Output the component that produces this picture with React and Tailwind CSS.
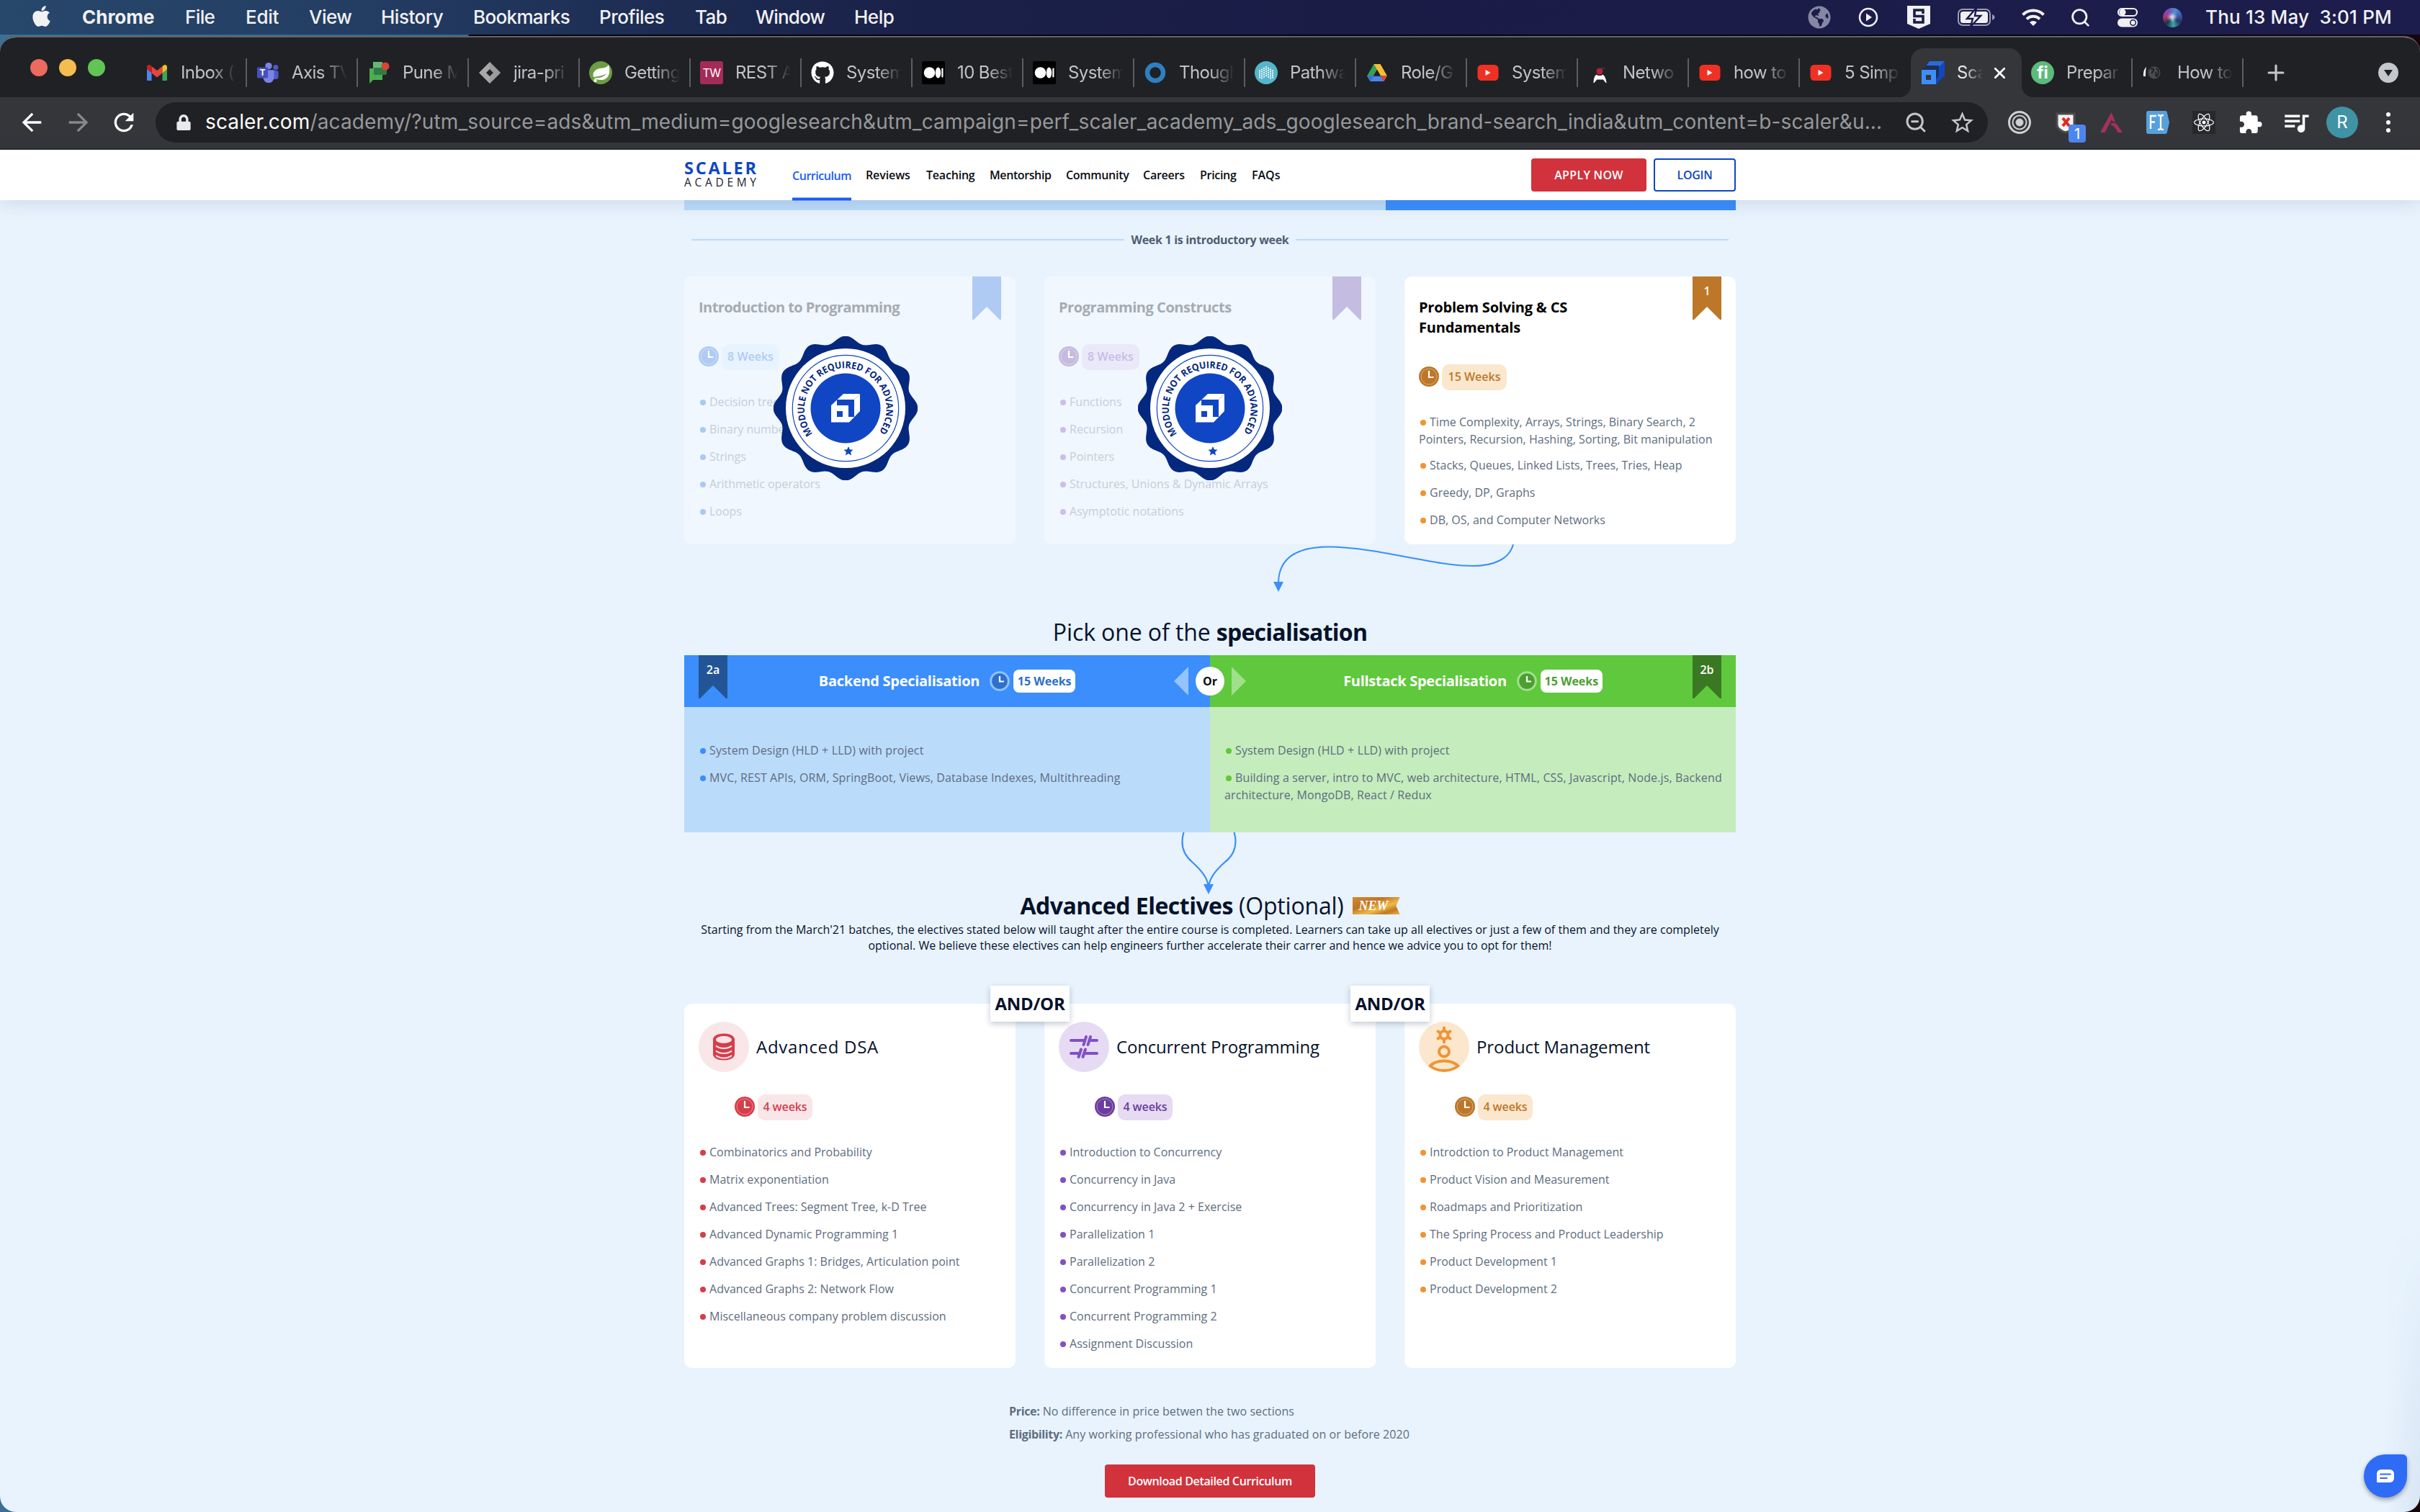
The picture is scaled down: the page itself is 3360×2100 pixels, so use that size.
import { FaApple, FaGithub, FaReact, FaLock, FaGlobeAmericas } from "react-icons/fa";
import { MdQueueMusic, MdStarBorder, MdArrowBack, MdArrowForward, MdRefresh, MdExtension } from "react-icons/md";
import { Search, X, Plus, ZoomOut } from "lucide-react";

const SANS = "font-['Open_Sans','Noto_Sans',sans-serif]";

/* ---------- menu bar ---------- */

const MENUS = [
  ["File", "w-[84px] tracking-[-0.6px]"],
  ["Edit", "w-[88px] tracking-[-0.3px]"],
  ["View", "w-[100px] tracking-[-0.5px]"],
  ["History", "w-[128px] tracking-[-0.5px]"],
  ["Bookmarks", "w-[175px] tracking-[-0.65px]"],
  ["Profiles", "w-[133px] tracking-[-0.5px]"],
  ["Tab", "w-[84px] tracking-[-0.6px]"],
  ["Window", "w-[137px] tracking-[-0.85px]"],
  ["Help", "w-[80px] tracking-[-0.5px]"],
];

function Battery() {
  return (
    <svg width="54" height="28" viewBox="0 0 54 28" fill="none">
      <rect x="2" y="3" width="44" height="22" rx="6" stroke="#9a9bb5" strokeWidth="2" />
      <rect x="5" y="6" width="38" height="16" rx="3.500" fill="#f1f1f5" />
      <path d="M49 10v8c2-.8 3.500-2.200 3.500-4S51 10.800 49 10z" fill="#9a9bb5" />
      <path d="M27 1 14 16h8l-3 11 14-15h-8l2-11z" fill="#f1f1f5" stroke="#1b1c4a" strokeWidth="2.500" />
    </svg>
  );
}

function Wifi() {
  return (
    <svg width="34" height="26" viewBox="0 0 34 26" fill="none" stroke="#f1f1f5" strokeWidth="4">
      <path d="M2.500 9.500C10.500 1.500 23.500 1.500 31.500 9.500" />
      <path d="M8 15.500c5-5 13-5 18 0" />
      <path d="M12 20c2.800-2.800 7.200-2.800 10 0l-5 5z" fill="#f1f1f5" stroke="none" />
    </svg>
  );
}

function MenuBar() {
  return (
    <div className="flex h-12 shrink-0 items-center bg-[linear-gradient(90deg,#27476b_0%,#243d63_15%,#1d2c52_27%,#1a2149_38%,#1a1c46_55%,#1c1d4c_100%)] font-['Inter',sans-serif] text-[26px] leading-none font-medium text-[#f1f1f4]">
      <div className="flex w-[114px] pb-1 pl-[41px]">
        <FaApple size={33} />
      </div>
      <div className="w-[143px] font-bold">Chrome</div>
      {MENUS.map(([label, cls]) => (
        <div key={label} className={cls}>{label}</div>
      ))}
      <div className="ml-auto flex w-[860px] items-center">
        <div className="flex w-[52px] justify-center text-[#8687a3]"><FaGlobeAmericas size={32} /></div>
        <div className="flex w-[84px] justify-center">
          <svg width="28" height="28" viewBox="0 0 28 28" fill="none">
            <circle cx="14" cy="14" r="12" stroke="#f1f1f5" strokeWidth="2.500" />
            <path d="M11 8.500v11l8-5.500z" fill="#f1f1f5" />
          </svg>
        </div>
        <div className="flex w-[55px] justify-center">
          <svg width="34" height="34" viewBox="0 0 34 34">
            <path d="M1 1h32v25L17 33 1 26z" fill="#f1f1f5" />
            <path d="M23 12V7H11v8.500h12V24H11v-5" fill="none" stroke="#1b1c4a" strokeWidth="3.600" />
          </svg>
        </div>
        <div className="flex w-[105px] justify-center"><Battery /></div>
        <div className="flex w-[53px] justify-center"><Wifi /></div>
        <div className="flex w-[79px] justify-center"><Search size={29} strokeWidth={2.300} /></div>
        <div className="flex w-[51px] justify-center">
          <svg width="30" height="28" viewBox="0 0 30 28" fill="none">
            <rect x="2" y="2" width="26" height="10" rx="5" stroke="#f1f1f5" strokeWidth="2.200" />
            <circle cx="8" cy="7" r="4.500" fill="#f1f1f5" />
            <rect x="1" y="15.500" width="28" height="12" rx="6" fill="#f1f1f5" />
            <circle cx="22.500" cy="21.500" r="3.800" stroke="#1b1c4a" strokeWidth="1.500" />
          </svg>
        </div>
        <div className="flex w-[74px] justify-center">
          <div className="flex size-[27px] items-center justify-center rounded-full bg-[conic-gradient(from_20deg,#4d8fc8,#3f58b8,#2a3560,#35a7b0,#20303f,#a73b7a,#7b4bb8,#4d8fc8)]">
            <div className="size-2 rounded-full bg-white/90 blur-[2px]" />
          </div>
        </div>
        <div className="pl-[9px] tracking-[0.2px] whitespace-pre">Thu 13 May  3:01 PM</div>
      </div>
    </div>
  );
}

/* ---------- tab icons ---------- */

function Gmail() {
  return (
    <svg width="32" height="32" viewBox="0 0 32 32">
      <path d="M2 8v17.500A1.500 1.500 0 0 0 3.500 27H8.500V15z" fill="#4a86f0" />
      <path d="M30 8v17.500a1.500 1.500 0 0 1-1.500 1.500H23.500V15z" fill="#3ba756" />
      <path d="M8.500 7 16 13l7.500-6v9.500L16 22.500l-7.500-6z" fill="#e2463c" />
      <path d="M2 11V8c0-2.500 3-3.800 5-2.200L8.500 7v9.500z" fill="#c5221f" />
      <path d="M30 11V8c0-2.500-3-3.800-5-2.200L23.500 7v9.500z" fill="#f7bb2f" />
    </svg>
  );
}

function Teams() {
  return (
    <svg width="34" height="32" viewBox="0 0 34 32">
      <circle cx="28.500" cy="8" r="3.800" fill="#5059c9" />
      <rect x="21" y="12.500" width="11.500" height="13" rx="4" fill="#5059c9" />
      <circle cx="18" cy="6" r="5" fill="#7b83eb" />
      <path d="M10 12h16v11a8 8 0 0 1-16 0z" fill="#7b83eb" />
      <rect x="1" y="8" width="16" height="16" rx="1.500" fill="#4650bb" />
      <text x="9" y="20.500" textAnchor="middle" fontFamily="Liberation Sans, sans-serif" fontWeight="700" fontSize="13" fill="#fff">T</text>
    </svg>
  );
}

function Meet() {
  return (
    <svg width="32" height="32" viewBox="0 0 32 32">
      <path d="M8 1h13v12H8z" fill="#63b877" />
      <path d="M3 10h18v16H8l-5 5z" fill="#4cae50" />
      <path d="M9 9h18v8a2 2 0 0 1-2 2H9z" fill="#2e7d46" />
      <circle cx="25" cy="7" r="5.500" fill="#db4437" />
    </svg>
  );
}

function Diamond() {
  return (
    <svg width="32" height="32" viewBox="0 0 32 32">
      <path d="M16 1 31 16 16 31 1 16zM16 11l-5 5 5 5 5-5z" fill="#a9a9a9" fillRule="evenodd" />
      <path d="M16 1v10l5 5-5 5v10l15-15z" fill="#8d8d8d" fillOpacity=".5" />
    </svg>
  );
}

function Spring() {
  return (
    <svg width="32" height="32" viewBox="0 0 32 32">
      <circle cx="16" cy="16" r="16" fill="#6c9d43" />
      <path d="M27 5c3 9 1 20-9 21-5 .5-9-1-11-3 9 1 14-2 17-6-5 3-10 4-18 5-2-7 3-11 9-12 6-.5 9-1 12-5z" fill="#fff" />
      <circle cx="8.500" cy="27" r="2.200" fill="#fff" />
    </svg>
  );
}

function Letters({ children, className }) {
  return <div className={"flex size-8 items-center justify-center font-['Inter',sans-serif] leading-none text-white " + className}>{children}</div>;
}

function Medium() {
  return (
    <svg width="32" height="32" viewBox="0 0 32 32">
      <rect width="32" height="32" rx="2" fill="#000" />
      <circle cx="10.500" cy="16" r="7.800" fill="#fff" />
      <ellipse cx="22.500" cy="16" rx="3.800" ry="7.500" fill="#fff" />
      <rect x="27.300" y="9.500" width="2.200" height="13" rx="1" fill="#fff" />
    </svg>
  );
}

function Ring() {
  return (
    <svg width="32" height="32" viewBox="0 0 32 32">
      <circle cx="16" cy="16" r="11" fill="none" stroke="#2f7fc2" strokeWidth="6.500" />
    </svg>
  );
}

function Pathway() {
  const dots = [];
  for (let r = 0; r < 5; r++) for (let c = 0; c < 7; c++) dots.push([7 + c * 3, 8 + Math.abs(c - 3) * 1.800 + r * 3]);
  return (
    <svg width="32" height="32" viewBox="0 0 32 32">
      <circle cx="16" cy="16" r="16" fill="#56b5cb" />
      {dots.filter(([, y]) => y < 25).map(([x, y]) => <circle key={x + "-" + y} cx={x} cy={y} r="1.100" fill="#fff" />)}
    </svg>
  );
}

function Drive() {
  return (
    <svg width="32" height="32" viewBox="0 0 32 32">
      <path d="M11.500 4h9L11 20.500 6.500 28 2 20.500z" fill="#34a05a" />
      <path d="M11.500 4h9l9.500 16.500h-9z" fill="#f8bd33" />
      <path d="M11 20.500h10L25.500 28h-19z" fill="#4a84ee" />
      <path d="M2 20.500h9L6.500 28z" fill="#3d6fdc" />
      <path d="M21 20.500h9L25.500 28z" fill="#e0483c" />
      <path d="m16 12 5 8.500H11z" fill="#202124" />
    </svg>
  );
}

function YouTube() {
  return (
    <svg width="32" height="32" viewBox="0 0 32 32">
      <rect x="1.500" y="5" width="29" height="22" rx="5.500" fill="#ee3124" />
      <path d="M12.500 12v8l7-4z" fill="#fff" />
    </svg>
  );
}

function Bug() {
  return (
    <svg width="32" height="32" viewBox="0 0 32 32">
      <circle cx="17" cy="14" r="4.500" fill="#b3203c" />
      <path d="M9 30c0-5 1-9 3.500-11 2 2 7 2 9 0C24 21 25.500 25 26 30l-4-5h-9z" fill="#fff" stroke="#fff" strokeWidth="1" />
      <path d="M19 12c1-4 4-3 6-1" stroke="#555" fill="none" strokeWidth="1" />
    </svg>
  );
}

function ScalerCube() {
  return (
    <svg width="32" height="32" viewBox="0 0 32 32">
      <path d="M11 0h21L25 8H5z" fill="#2a6bd6" />
      <path d="M32 0v20L20 32V12z" fill="#1247c0" />
      <path d="M0 12 6 6h18v14l-4 5V12z" fill="#202f55" />
      <path d="M0 12h20v20H0zM6 19v7h7v-7z" fill="#3c8ffb" fillRule="evenodd" />
    </svg>
  );
}

function GhostGlobe() {
  return (
    <svg width="32" height="32" viewBox="0 0 32 32">
      <path d="M2 21c0-5 0-9 4-13-1 4-1 9-1 13z" fill="#fff" />
      <circle cx="17" cy="16" r="8.500" fill="#4a4b4f" />
      <path d="M12 11c3-2 5 0 4 2s-3 2-2 4M20 10c3 2 4 6 1 11-3 0-1-4-2-6" fill="none" stroke="#202124" strokeWidth="2" />
    </svg>
  );
}

const TABS = [
  ["Inbox (", <Gmail />],
  ["Axis TV", <Teams />],
  ["Pune M", <Meet />],
  ["jira-pri", <Diamond />],
  ["Getting", <Spring />],
  ["REST A", <Letters className="rounded-[3px] bg-[#a42b57] text-[16px] tracking-[-0.5px]">TW</Letters>],
  ["System", <FaGithub size={32} color="#fff" />],
  ["10 Best", <Medium />],
  ["System", <Medium />],
  ["Though", <Ring />],
  ["Pathwa", <Pathway />],
  ["Role/G", <Drive />],
  ["System", <YouTube />],
  ["Netwo", <Bug />],
  ["how to", <YouTube />],
  ["5 Simp", <YouTube />],
  ["Scal", <ScalerCube />, true],
  ["Prepar", <Letters className="rounded-full bg-[#5bbb7b] text-[23px] font-bold">fi</Letters>],
  ["How to", <GhostGlobe />],
];

function Tab({ label, icon, active, bare }) {
  return (
    <div
      className={
        "relative flex h-[68px] w-[154px] shrink-0 items-center " +
        (active ? "rounded-t-[18px] bg-[#35363a] pl-[15px]" : "pl-[13px]")
      }
    >
      {active && (
        <>
          <svg className="absolute bottom-0 -left-4" width="16" height="16"><path d="M16 0v16H0A16 16 0 0 0 16 0z" fill="#35363a" /></svg>
          <svg className="absolute -right-4 bottom-0" width="16" height="16"><path d="M0 0v16h16A16 16 0 0 1 0 0z" fill="#35363a" /></svg>
        </>
      )}
      <div className="flex size-8 shrink-0 items-center justify-center">{icon}</div>
      <div
        className={
          "ml-[17px] overflow-hidden whitespace-nowrap " +
          (active
            ? "w-[36px] tracking-[-0.4px] text-[#e8eaed] [mask-image:linear-gradient(90deg,#000_30%,transparent)]"
            : "w-[77px] tracking-[-0.6px] text-[#c0c3c7] [mask-image:linear-gradient(90deg,#000_55%,transparent)]")
        }
      >
        {label}
      </div>
      {active && <X size={25} strokeWidth={2.600} className="ml-[11px] shrink-0 text-white" />}
      {!active && !bare && <div className="ml-auto h-10 w-0.5 bg-[#5b5d61]" />}
    </div>
  );
}

function TabStrip() {
  return (
    <div className="flex h-[83px] shrink-0 items-end bg-[#202124] font-['Inter',sans-serif] text-[24px] leading-[30px]">
      <div className="flex h-[83px] w-[189px] shrink-0 items-center gap-4 pl-[42px]">
        <div className="size-6 rounded-full bg-[#ed6a5e]" />
        <div className="size-6 rounded-full bg-[#f5bd4f]" />
        <div className="size-6 rounded-full bg-[#61c454]" />
      </div>
      {TABS.map(([label, icon, active], i) => (
        <Tab key={i} label={label} icon={icon} active={active} bare={i === 15} />
      ))}
      <div className="flex h-[68px] w-[90px] items-center justify-center text-[#c4c7cb]">
        <Plus size={34} strokeWidth={2.200} />
      </div>
      <div className="mr-[30px] ml-auto flex h-[68px] items-center">
        <svg width="28" height="28" viewBox="0 0 28 28">
          <circle cx="14" cy="14" r="14" fill="#c4c7cb" />
          <path d="M8 10h12l-6 9z" fill="#202124" />
        </svg>
      </div>
    </div>
  );
}

function Slot({ children }) {
  return <div className="relative flex w-16 shrink-0 items-center justify-center">{children}</div>;
}

function Toolbar() {
  return (
    <div className="flex h-[73px] shrink-0 items-center border-b-2 border-[#27282b] bg-[#35363a] pr-3 pb-px pl-[11px] font-['Inter',sans-serif] text-[28px]">
      <div className="flex w-[65px] justify-center text-white"><MdArrowBack size={40} /></div>
      <div className="flex w-[65px] justify-center text-[#87888b]"><MdArrowForward size={40} /></div>
      <div className="flex w-[62px] justify-center text-white"><MdRefresh size={40} /></div>
      <div className="ml-[13px] flex h-14 w-[2544px] items-center overflow-hidden rounded-full bg-[#202124] pr-1 pl-[28px] whitespace-nowrap text-[#96989c]">
        <FaLock size={22} className="mr-[19px] text-[#e8eaed]" />
        <div className="grow pb-0.5 tracking-[0.14px]">
          <span className="text-white">scaler.com</span>
          <span>/academy/?utm_source=ads&amp;utm_medium=googlesearch&amp;utm_campaign=perf_scaler_academy_ads_googlesearch_brand-search_india&amp;utm_content=b-scaler&amp;u...</span>
        </div>
        <div className="flex w-16 shrink-0 justify-center text-[#c4c7cb]"><ZoomOut size={32} strokeWidth={2.200} /></div>
        <div className="flex w-16 shrink-0 justify-center text-[#c4c7cb]"><MdStarBorder size={37} /></div>
      </div>
      <div className="ml-3 flex items-center">
        <Slot>
          <svg width="34" height="34" viewBox="0 0 34 34" fill="none" stroke="#cfd0d2">
            <circle cx="17" cy="17" r="14.500" strokeWidth="3" />
            <circle cx="17" cy="17" r="9.500" strokeWidth="2" />
            <circle cx="17" cy="17" r="5" fill="#cfd0d2" />
          </svg>
        </Slot>
        <Slot>
          <svg width="28" height="30" viewBox="0 0 28 30">
            <path d="M2 3h24v15c0 6-6 9-12 11C8 27 2 24 2 18z" fill="#f3f3f3" stroke="#4c4c4c" strokeWidth="3" />
            <path d="m10 9 9 11M19 9l-9 11" stroke="#e02b20" strokeWidth="4" />
          </svg>
          <div className="absolute top-[18px] left-[36px] flex h-[25px] w-6 items-center justify-center rounded-[4px] bg-[#4d86ee] text-[20px] leading-none text-white">1</div>
        </Slot>
        <Slot>
          <svg width="32" height="28" viewBox="0 0 32 28">
            <path d="M15.500 0 17 8 6.500 28H0z" fill="#a5315c" />
            <path d="M15.500 0 21 13l-4.500-.5z" fill="#a5315c" />
            <path d="M14 17c3-3 6-3 9-.5L31 28h-7c-1-5-5-9-10-11z" fill="#a5315c" />
          </svg>
        </Slot>
        <Slot>
          <svg width="32" height="32" viewBox="0 0 32 32">
            <path d="M3 0h23a3 3 0 0 1 3 3l3 13-3 13a3 3 0 0 1-3 3H3a3 3 0 0 1-3-3V3a3 3 0 0 1 3-3z" fill="#58a0dc" />
            <path d="M6 25V7h8M6 15.500h6M16 6c2 0 4 0 4 2v16c0 2-2 2-4 2M24 6c-2 0-4 0-4 2v16c0 2 2 2 4 2" fill="none" stroke="#fff" strokeWidth="2.300" />
          </svg>
        </Slot>
        <Slot>
          <div className="flex size-8 items-center justify-center bg-[#27282b] text-white"><FaReact size={28} /></div>
        </Slot>
        <Slot><MdExtension size={35} color="#fff" /></Slot>
        <Slot><MdQueueMusic size={42} color="#fff" /></Slot>
        <Slot>
          <div className="flex size-11 items-center justify-center rounded-full bg-[#3f93a5] text-[24px] leading-none text-white">R</div>
        </Slot>
        <Slot>
          <div className="flex flex-col gap-[5px]">
            <div className="size-1.5 rounded-full bg-white" />
            <div className="size-1.5 rounded-full bg-white" />
            <div className="size-1.5 rounded-full bg-white" />
          </div>
        </Slot>
      </div>
    </div>
  );
}

/* ---------- page ---------- */

const NAV = [
  ["Reviews", "w-[64px] tracking-[-0.1px]"],
  ["Teaching", "w-[68px] tracking-[-0.2px]"],
  ["Mentorship", "w-[86px] tracking-[-0.4px]"],
  ["Community", "w-[87px] tracking-[-0.3px]"],
  ["Careers", "w-[59px] tracking-[-0.25px]"],
  ["Pricing", "w-[52px] tracking-[-0.3px]"],
  ["FAQs", "w-[41px] tracking-[0px]"],
];

function Header() {
  return (
    <div className="relative z-10 flex h-[70px] shrink-0 justify-center bg-white shadow-[0_4px_28px_rgba(20,50,110,0.13)]">
      <div className="flex w-[1460px] items-center text-[16px] font-semibold text-[#0b0d12]">
        <div className="w-[150px]">
          <div className="text-[23.500px] leading-[21px] font-bold tracking-[2.800px] text-[#0f47c4]">SCALER</div>
          <div className="text-[15.500px] leading-[19px] font-normal tracking-[4.700px] text-[#1a2233]">ACADEMY</div>
        </div>
        <div className="flex h-full items-center gap-5 pb-px whitespace-nowrap">
          <div className="flex h-[70px] w-[82px] translate-y-[0.5px] items-center border-b-4 border-[#1c5cf5] pt-1 tracking-[-0.46px] text-[#1c5cf5]">Curriculum</div>
          {NAV.map(([label, cls]) => (
            <div key={label} className={cls}>{label}</div>
          ))}
        </div>
        <div className="ml-auto flex gap-[10px]">
          <div className="flex h-[46px] w-[160px] items-center justify-center rounded-[4px] bg-[#d1323c] pb-px tracking-[0.3px] text-white">APPLY NOW</div>
          <div className="flex h-[46px] w-[114px] items-center justify-center rounded-[4px] border-2 border-[#0f47c4] pb-px tracking-[-0.3px] text-[#0f47c4]">LOGIN</div>
        </div>
      </div>
    </div>
  );
}

function Ribbon({ className, label }) {
  return (
    <div className={"absolute top-0 flex h-[60px] w-10 justify-center pt-2 text-[16px] leading-6 font-semibold text-white [clip-path:polygon(0_0,100%_0,100%_100%,95%_100%,50%_70%,5%_100%,0_100%)] " + className}>
      {label}
    </div>
  );
}

function Clock({ className }) {
  return (
    <svg width="28" height="28" viewBox="0 0 28 28" className={className}>
      <circle cx="14" cy="14" r="14" fill="currentColor" />
      <circle cx="14" cy="14" r="11" fill="none" stroke="#fff" strokeOpacity=".4" strokeWidth="1" />
      <path d="M14 6v9h6.500" fill="none" stroke="#fff" strokeWidth="2.200" />
    </svg>
  );
}

function SpecClock({ ring, face }) {
  return (
    <svg width="28" height="28" viewBox="0 0 28 28">
      <circle cx="14" cy="14" r="12.300" fill={face} stroke={ring} strokeWidth="3" />
      <path d="M14 7v7.500h6" fill="none" stroke="#fff" strokeWidth="2.200" />
    </svg>
  );
}

const SCALLOP =
  "M" +
  Array.from({ length: 240 }, (_, i) => {
    const a = (i / 240) * 2 * Math.PI;
    const r = 95.800 + 4.600 * Math.cos(12 * a);
    return (100 + r * Math.sin(a)).toFixed(2) + " " + (100 - r * Math.cos(a)).toFixed(2);
  }).join("L") +
  "Z";

function Seal({ id, className }) {
  return (
    <svg width="200" height="200" viewBox="0 0 200 200" className={"absolute top-[83px] " + className}>
      <path d={SCALLOP} fill="#05287f" />
      <circle cx="100" cy="100" r="83" fill="#fff" />
      <circle cx="100" cy="100" r="73.700" fill="none" stroke="#1046c4" strokeWidth="1.200" />
      <circle cx="100" cy="100" r="48.500" fill="#1046c4" />
      <path d="M97 80h23v24l-15 15.500H80V96z" fill="#fff" />
      <path d="M88 88h24v24h-8V96H88zM88 104h8v8h-8z" fill="#1046c4" />
      <path d="m112 88 8-8" stroke="#1046c4" strokeOpacity=".5" strokeWidth=".6" />
      <path id={id} d="M54.500 135.500A56.800 56.800 0 1 1 146 134" fill="none" />
      <text fontFamily="Open Sans, Noto Sans, sans-serif" fontWeight="700" fontSize="13.200" fill="#05287f">
        <textPath href={"#" + id} textLength="249" lengthAdjust="spacingAndGlyphs">MODULE NOT REQUIRED FOR ADVANCED</textPath>
      </text>
      <path d="m104 153 1.900 4.200 4.600.5-3.400 3.100 1 4.600-4.100-2.400-4.100 2.400 1-4.600-3.400-3.100 4.600-.5z" fill="#1046c4" />
    </svg>
  );
}

function List({ items, dot, className }) {
  return (
    <div className={"flex flex-col gap-[14px] text-[16px] leading-6 font-medium " + className}>
      {items.map((t, i) => (
        <div key={i}>
          <span className={"mr-[5px] ml-[2px] inline-block size-2 rounded-full align-[1.500px] " + dot} />
          {t}
        </div>
      ))}
    </div>
  );
}

function Pill({ className, children }) {
  return (
    <div className={"flex h-9 items-center justify-center rounded-[10px] pb-[2px] text-[16px] font-semibold whitespace-nowrap " + className}>{children}</div>
  );
}

function ModuleCard({ title, titleCls, cardCls, ribbonCls, label, clockCls, pill, pillCls, items, dot, listCls, children }) {
  return (
    <div className={"relative h-[372px] w-[460px] rounded-[10px] px-5 pt-[29px] " + cardCls}>
      <Ribbon className={"right-5 " + ribbonCls} label={label} />
      <div className={"w-[310px] text-[20px] leading-7 font-bold " + titleCls}>{title}</div>
      <div className="mt-[37px] flex items-center gap-1">
        <Clock className={"-translate-y-px " + clockCls} />
        <Pill className={pillCls}>{pill}</Pill>
      </div>
      <List items={items} dot={dot} className={"mt-[32px] " + listCls} />
      {children}
    </div>
  );
}

function IntroArrow() {
  return (
    <svg width="1460" height="97" viewBox="0 0 1460 97" className="block shrink-0" fill="none">
      <path d="M1151 0C1146 20 1125 30 1094 30 1042 30 958 3.500 895 3.500 846 3.500 825 22 825 54" stroke="#3b8efc" strokeWidth="2" />
      <path d="M818 52h14l-7 14z" fill="#3b8efc" />
    </svg>
  );
}

function MergeArrow() {
  return (
    <svg width="1460" height="86" viewBox="0 0 1460 86" className="block shrink-0" fill="none">
      <path d="M693.500 0C687 22 698 35 705 41 717 52 726 62 727.500 74M763.500 0C770 22 759 35 751 41 739 52 730 62 728.500 74" stroke="#3b8efc" strokeWidth="2.200" />
      <path d="M721 72h14l-7 14z" fill="#3b8efc" />
    </svg>
  );
}

function SpecColumn({ title, head, body, pillCls, ring, face, items, dot, ribbon }) {
  return (
    <div className="w-1/2">
      <div className={"relative flex h-[72px] items-center justify-center " + head}>
        {ribbon}
        <div className="text-[20px] leading-7 font-bold tracking-[-0.28px] text-white">{title}</div>
        <div className="ml-[14px] flex items-center gap-[5px]">
          <SpecClock ring={ring} face={face} />
          <div className={"flex h-8 w-[86px] items-center justify-center rounded-[8px] bg-white text-[16px] font-bold " + pillCls}>15 Weeks</div>
        </div>
      </div>
      <div className={"h-[174px] px-5 pt-12 " + body}>
        <List items={items} dot={dot} className="tracking-[0.13px] whitespace-nowrap text-[#5d6d80]" />
      </div>
    </div>
  );
}

function DsaIcon() {
  return (
    <svg width="70" height="70" viewBox="0 0 70 70" fill="none">
      <path d="M20 25c0-5 6-8.500 15-8.500S50 20 50 25v20c0 5-6 8.500-15 8.500S20 50 20 45z" fill="#d63d4b" />
      <ellipse cx="35" cy="25" rx="11" ry="5" fill="#f8e6e8" />
      <path d="M24 33.500c5 4.500 17 4.500 22 0M24 40.500c5 4.500 17 4.500 22 0M24 47c5 4.500 17 4.500 22 0" stroke="#f8e6e8" strokeWidth="2" />
    </svg>
  );
}

function ConcurrencyIcon() {
  return (
    <svg width="70" height="70" viewBox="0 0 70 70" fill="none" stroke="#8350c4" strokeWidth="4" strokeLinecap="round">
      <path d="M17 26h19M43 26h10M38 21l-3.500 11M44 21l-3.500 11" />
      <path d="M17 44h10M35 44h18M31 38.500 27.500 49M37 38.500 33.500 49" />
    </svg>
  );
}

function ProductIcon() {
  return (
    <svg width="70" height="70" viewBox="0 0 70 70" fill="none" stroke="#f09433" strokeWidth="4" strokeLinecap="round">
      <circle cx="35" cy="18.500" r="5.500" />
      <path d="M35 8.500v3M35 25.500v3M26.500 13.500l2.500 1.500M41 22l2.500 1.500M26.500 23.500 29 22M41 15l2.500-1.500" />
      <circle cx="35" cy="41.500" r="7" />
      <path d="M15.500 61.500C20 57 26 54.500 35 54.500s15 2.500 19.500 7C49 66 43 68 35 68s-14-2-19.500-6.500z" strokeLinejoin="round" />
    </svg>
  );
}

function ElectiveCard({ title, titleCls, icon, iconCls, clockCls, pillCls, items, dot }) {
  return (
    <div className="h-[506px] w-[460px] rounded-[10px] bg-white px-5 pt-[25px]">
      <div className="flex items-center gap-[10px]">
        <div className={"size-[70px] overflow-hidden rounded-full " + iconCls}>{icon}</div>
        <div className={"text-[24px] leading-8 font-medium whitespace-nowrap text-[#07122b] " + titleCls}>{title}</div>
      </div>
      <div className="mt-[31px] ml-[50px] flex items-center gap-1">
        <Clock className={"-translate-y-px " + clockCls} />
        <Pill className={"w-[76px] tracking-[-0.1px] " + pillCls}>4 weeks</Pill>
      </div>
      <List items={items} dot={dot} className="mt-[32px] tracking-[0.02px] text-[#5e6d80]" />
    </div>
  );
}

function AndOr({ className }) {
  return (
    <div className={"absolute -top-[25px] flex h-[50px] w-[110px] items-center justify-center bg-white text-[24px] font-bold tracking-[-0.28px] text-[#07122b] shadow-[0_3px_8px_rgba(20,40,80,0.25)] " + className}>
      AND/OR
    </div>
  );
}

function NewBadge() {
  return (
    <div className="ml-3 flex h-6 w-[66px] items-center bg-[linear-gradient(160deg,#cf8a2c_0%,#c07526_35%,#eebb45_62%,#c27828_80%,#e9b343_100%)] pl-[9px] font-['Liberation_Serif',serif] text-[18px] leading-none font-bold text-white italic [clip-path:polygon(0_0,100%_0,92%_50%,100%_100%,0_100%)]">
      NEW
    </div>
  );
}

export default function App() {
  return (
    <div className="flex h-[2100px] w-[3360px] flex-col overflow-hidden bg-[#1c1d4c]">
      <MenuBar />
      <div className="flex min-h-0 grow flex-col bg-[linear-gradient(90deg,#3c6f96_0,#356690_650px,#05050c_651px,#05050c_90%,#16060b_100%)] pt-[2px]">
        <div className={"relative flex h-[2050px] w-full flex-col overflow-hidden rounded-[22px] border-t-2 border-[#626367] bg-[#e8f3fd] " + SANS}>
          <TabStrip />
          <Toolbar />
          <Header />
          <div className="mx-auto flex w-[1460px] flex-col">
            <div className="flex h-[14px]">
              <div className="w-[974px] bg-[#bbdbfb]" />
              <div className="grow bg-[#3b8efc]" />
            </div>
            <div className="mt-[29px] flex h-6 items-center gap-[10px] px-[10px] text-[16px] font-bold tracking-[-0.3px] whitespace-nowrap text-[#4f5e73]">
              <div className="h-0.5 grow bg-[#bbdbfb]" />
              <div className="pb-px">Week 1 is introductory week</div>
              <div className="h-0.5 grow bg-[#bbdbfb]" />
            </div>
            <div className="mt-[39px] flex gap-10">
              <ModuleCard
                title="Introduction to Programming"
                titleCls="tracking-[-0.56px] text-[#a5abb2]"
                cardCls="bg-[#f0f7ff]"
                ribbonCls="bg-[#afcbf3]"
                clockCls="text-[#b0cbf3]"
                pill="8 Weeks"
                pillCls="w-[80px] bg-[#e7f3ff] text-[#b0cbf3]"
                items={["Decision tree", "Binary numbers", "Strings", "Arithmetic operators", "Loops"]}
                dot="bg-[#a9c9f4]"
                listCls="tracking-[-0.05px] text-[#c4ceda]"
              >
                <Seal id="seal-intro" className="left-[124px]" />
              </ModuleCard>
              <ModuleCard
                title="Programming Constructs"
                titleCls="tracking-[-0.45px] text-[#a5abb2]"
                cardCls="bg-[#f0f7ff]"
                ribbonCls="bg-[#c5bce1]"
                clockCls="text-[#c5bbdf]"
                pill="8 Weeks"
                pillCls="w-[80px] bg-[#e9e9fa] text-[#c9bce6]"
                items={["Functions", "Recursion", "Pointers", "Structures, Unions & Dynamic Arrays", "Asymptotic notations"]}
                dot="bg-[#cbbdec]"
                listCls="tracking-[0.03px] text-[#c4ceda]"
              >
                <Seal id="seal-constructs" className="left-[130px]" />
              </ModuleCard>
              <ModuleCard
                title={<>Problem Solving &amp; CS<br />Fundamentals</>}
                titleCls="tracking-[-0.2px] text-black"
                cardCls="bg-white"
                ribbonCls="bg-[#bd7728]"
                label="1"
                clockCls="text-[#bd7728]"
                pill="15 Weeks"
                pillCls="w-[90px] bg-[#fae7cd] text-[#bd7728]"
                items={[
                  <>Time Complexity, Arrays, Strings, Binary Search, 2<span className="-mb-[2px] block">Pointers, Recursion, Hashing, Sorting, Bit manipulation</span></>,
                  "Stacks, Queues, Linked Lists, Trees, Tries, Heap",
                  "Greedy, DP, Graphs",
                  "DB, OS, and Computer Networks",
                ]}
                dot="bg-[#f09433]"
                listCls="tracking-[0.02px] whitespace-nowrap text-[#5e6d80]"
              />
            </div>
            <IntroArrow />
            <div className="mb-[7px] h-[50px] text-center text-[32px] leading-[50px] tracking-[-0.1px] whitespace-pre text-[#07122b]">
              Pick one of the <span className="font-bold tracking-[-0.75px]">specialisation</span>
            </div>
            <div className="relative flex">
              <SpecColumn
                title="Backend Specialisation"
                head="bg-[#3b8efc]"
                body="bg-[#bbdbfb]"
                pillCls="text-[#2f70c8]"
                ring="#91c1fd"
                face="#2f70c8"
                items={["System Design (HLD + LLD) with project", "MVC, REST APIs, ORM, SpringBoot, Views, Database Indexes, Multithreading"]}
                dot="bg-[#3b8efc]"
                ribbon={<Ribbon className="left-5 bg-[#235596]" label="2a" />}
              />
              <SpecColumn
                title="Fullstack Specialisation"
                head="bg-[#5fc83c]"
                body="bg-[#c5ecbc]"
                pillCls="text-[#4c9f31]"
                ring="#a0e090"
                face="#4c9f31"
                items={[
                  "System Design (HLD + LLD) with project",
                  <>Building a server, intro to MVC, web architecture, HTML, CSS, Javascript, Node.js, Backend<br />architecture, MongoDB, React / Redux</>,
                ]}
                dot="bg-[#5fc83c]"
                ribbon={<Ribbon className="right-5 bg-[#3b7824]" label="2b" />}
              />
              <div className="absolute top-4 left-[680px] flex items-center gap-[10px]">
                <div className="h-10 w-5 bg-[#95c3fd] [clip-path:polygon(100%_0,100%_100%,0_50%)]" />
                <div className="flex size-10 items-center justify-center rounded-full bg-white text-[16px] font-bold text-[#0b0d12]">Or</div>
                <div className="h-10 w-5 bg-[#9fe08b] [clip-path:polygon(0_0,0_100%,100%_50%)]" />
              </div>
            </div>
            <MergeArrow />
            <div className="flex h-8 items-center justify-center text-[32px] leading-8 tracking-[-0.2px] whitespace-pre text-[#07122b]">
              <span className="font-bold tracking-[-0.5px]">Advanced Electives</span> (Optional)
              <NewBadge />
            </div>
            <div className="mt-[6px] text-center text-[16px] leading-[22px] font-medium tracking-[0.01px] whitespace-nowrap text-[#07122b]">
              Starting from the March'21 batches, the electives stated below will taught after the entire course is completed. Learners can take up all electives or just a few of them and they are completely
              <br />
              optional. We believe these electives can help engineers further accelerate their carrer and hence we advice you to opt for them!
            </div>
            <div className="relative mt-[70px] flex gap-10">
              <ElectiveCard
                title="Advanced DSA"
                titleCls="tracking-[0.7px]"
                icon={<DsaIcon />}
                iconCls="bg-[#f8e6e8]"
                clockCls="text-[#d63d4b]"
                pillCls="bg-[#f8e6e8] text-[#d63d4b]"
                dot="bg-[#d63d4b]"
                items={["Combinatorics and Probability", "Matrix exponentiation", "Advanced Trees: Segment Tree, k-D Tree", "Advanced Dynamic Programming 1", "Advanced Graphs 1: Bridges, Articulation point", "Advanced Graphs 2: Network Flow", "Miscellaneous company problem discussion"]}
              />
              <ElectiveCard
                title="Concurrent Programming"
                titleCls="tracking-[-0.2px]"
                icon={<ConcurrencyIcon />}
                iconCls="bg-[#e6dbf3]"
                clockCls="text-[#6c3ca0]"
                pillCls="bg-[#e6dbf3] text-[#6c3ca0]"
                dot="bg-[#8350c4]"
                items={["Introduction to Concurrency", "Concurrency in Java", "Concurrency in Java 2 + Exercise", "Parallelization 1", "Parallelization 2", "Concurrent Programming 1", "Concurrent Programming 2", "Assignment Discussion"]}
              />
              <ElectiveCard
                title="Product Management"
                titleCls="tracking-[-0.1px]"
                icon={<ProductIcon />}
                iconCls="bg-[#fae7cd]"
                clockCls="text-[#bd7728]"
                pillCls="bg-[#fae7cd] text-[#bd7728]"
                dot="bg-[#f09433]"
                items={["Introdction to Product Management", "Product Vision and Measurement", "Roadmaps and Prioritization", "The Spring Process and Product Leadership", "Product Development 1", "Product Development 2"]}
              />
              <AndOr className="left-[425px]" />
              <AndOr className="left-[925px]" />
            </div>
            <div className="mt-[44px] mb-[26px] ml-[451px] text-[16px] leading-8 font-medium tracking-[0.07px] text-[#5e6d80]">
              <div><span className="font-bold tracking-[-0.34px]">Price:</span> No difference in price betwen the two sections</div>
              <div><span className="font-bold tracking-[-0.34px]">Eligibility:</span> Any working professional who has graduated on or before 2020</div>
            </div>
            <div className="flex h-[46px] w-[292px] items-center justify-center self-center rounded-[4px] bg-[#d1323c] pb-px text-[16px] font-semibold tracking-[-0.35px] text-white">
              Download Detailed Curriculum
            </div>
          </div>
          <div className="absolute right-0 bottom-0 h-[400px] w-[50px] bg-[linear-gradient(90deg,transparent,rgba(40,80,140,0.08))] [mask-image:linear-gradient(180deg,transparent,#000)]" />
          <div className="absolute right-[18px] bottom-[20px] flex size-[60px] items-center justify-center rounded-[30px] rounded-tr-[6px] bg-[#2e6cf6] shadow-[0_3px_6px_rgba(0,0,0,0.35)]">
            <svg width="24" height="18" viewBox="0 0 24 18">
              <path d="M6 0h12a6 6 0 0 1 6 6v6a6 6 0 0 1-6 6H1a1 1 0 0 1-1-1V6a6 6 0 0 1 6-6z" fill="#fff" />
              <path d="M5 6.500h14M5 12h9" stroke="#2e6cf6" strokeWidth="2" strokeLinecap="round" />
            </svg>
          </div>
        </div>
      </div>
    </div>
  );
}
